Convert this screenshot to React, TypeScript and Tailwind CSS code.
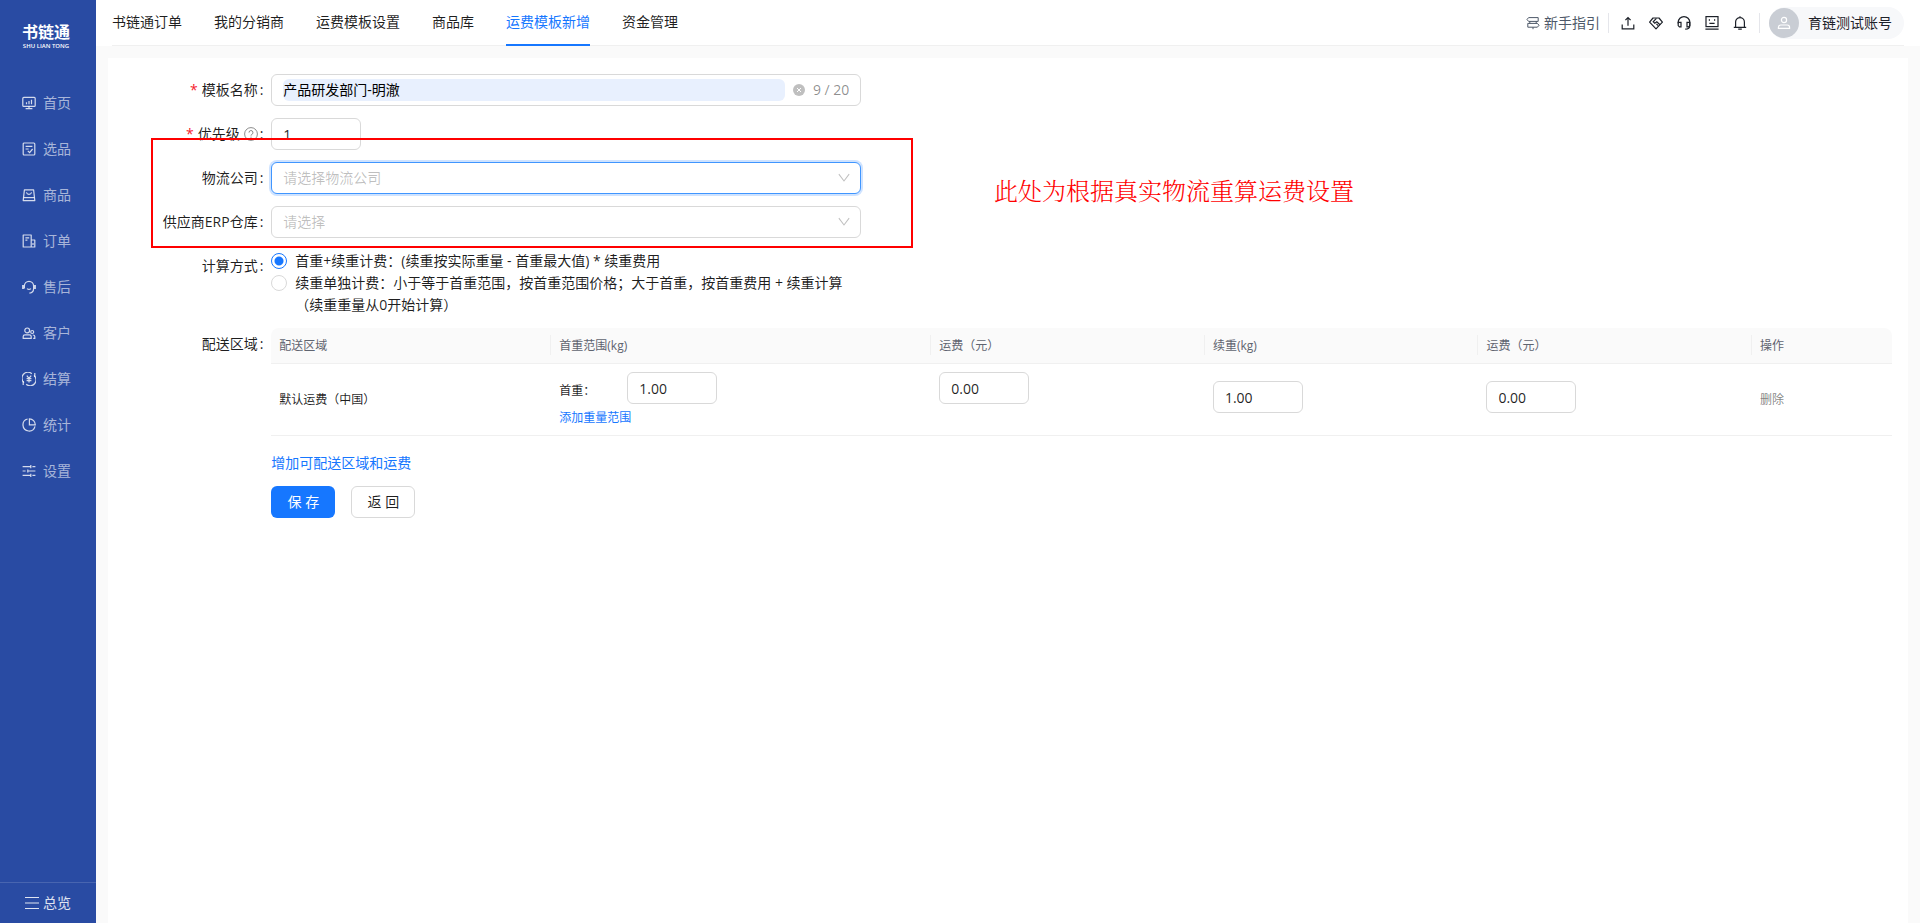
import type { ReactNode } from 'react'

type IconProps = { children: ReactNode; className?: string }

function Icon({ children, className = 'size-3.5' }: IconProps) {
  return (
    <svg
      viewBox="0 0 14 14"
      className={`shrink-0 ${className}`}
      fill="none"
      stroke="currentColor"
      strokeWidth="1.2"
      aria-hidden="true"
    >
      {children}
    </svg>
  )
}

const menu: { label: string; icon: ReactNode }[] = [
  {
    label: '首页',
    icon: (
      <>
        <rect x="0.8" y="1.4" width="12.4" height="9" rx="1" />
        <path d="M4.5 8.2V6.2M7 8.2V5M9.5 8.2V3.8M7 10.2v2M3.6 12.6h6.8" />
      </>
    ),
  },
  {
    label: '选品',
    icon: (
      <>
        <rect x="1.2" y="1" width="11.6" height="12" rx="1" />
        <path d="M3.6 4.4h6.8M3.6 7h3M5.8 8.8l1.8 1.8L10.6 7" />
      </>
    ),
  },
  {
    label: '商品',
    icon: (
      <>
        <path d="M2.4 1.8h9.2l1.2 10.8H1.200z" strokeLinejoin="round" />
        <path d="M4.4 4.4c.8 2.6 4.4 2.6 5.2 0" />
        <path d="M1.6 9.6h10.8" />
      </>
    ),
  },
  {
    label: '订单',
    icon: (
      <>
        <path d="M1.2 1h8v12h-8zM9.2 6h3.6v7H9.200" strokeLinejoin="round" />
        <path d="M3.4 3.8h3.8M3.4 6.2h2M11 9v2" />
      </>
    ),
  },
  {
    label: '售后',
    icon: (
      <>
        <path d="M2.4 8.6V6a4.6 4.6 0 0 1 9.2 0v2.4c0 2.6-1.6 4.4-4.2 4.8" />
        <path d="M1 5v4M13 5v4" strokeWidth="1.8" />
        <path d="M5 8.6c1.2 1 2.8 1 4 0" />
      </>
    ),
  },
  {
    label: '客户',
    icon: (
      <>
        <circle cx="5.2" cy="4.4" r="2.4" />
        <path d="M1.2 12.400v-1.800c0-1 .8-1.800 1.800-1.800h4.400c1 0 1.800.8 1.800 1.800v1.800z" />
        <circle cx="10.2" cy="6" r="1.5" />
        <path d="M10.800 9c1.200 0 2 .6 2 1.600v1.800h-1.600" />
      </>
    ),
  },
  {
    label: '结算',
    icon: (
      <>
        <path d="M2 10.6A5.8 5.8 0 0 1 9.800 1.700M12 3.400A5.800 5.800 0 0 1 4.200 12.300" />
        <path d="M12.800 1v4M1.200 9v4" />
        <path d="M4.800 3.600L7 6.400l2.200-2.800M4.600 6.700h4.800M4.600 8.700h4.800M7 6.400v4.200" />
      </>
    ),
  },
  {
    label: '统计',
    icon: (
      <>
        <path d="M5.600 1a6.100 6.100 0 1 0 7.400 7.400" />
        <path d="M7.400.8a6 6 0 0 1 5.900 6H7.400z" />
      </>
    ),
  },
  {
    label: '设置',
    icon: <path d="M.6 2.600h7.800M10.400 2.600h3M8.800 1v3.200M.6 7h3M6.200 7h7.200M5.800 5.400v3.200M.6 11.400h7.800M10.400 11.400h3M8.800 9.800V13" />,
  },
]

const tabs = ['书链通订单', '我的分销商', '运费模板设置', '商品库', '运费模板新增', '资金管理']
const activeTab = '运费模板新增'

const tools: { label: string; icon: ReactNode }[] = [
  { label: '上传', icon: <path d="M1.200 8.400v4.400h11.600V8.400M7 9.800V1.800M4.400 4.200L7 1.600l2.600 2.600" /> },
  {
    label: '合作',
    icon: (
      <>
        <path d="M7 12.800L.6 6.200 4 2h6l3.400 4.200z" strokeLinejoin="round" />
        <path d="M7.400 2.400L4.200 5.800l1.600 1.400 2-1.400 3.200 3M7.400 7.800l1.800 1.800" />
      </>
    ),
  },
  {
    label: '客服',
    icon: (
      <>
        <path d="M1.200 7.600V6.400a5.800 5.800 0 0 1 11.600 0v3.400c0 2-1.400 3.400-4.600 3.400" />
        <path d="M1.200 6.400H4v4.400H2.400L1.200 9.600zM12.800 6.400H10v4.400h1.600l1.200-1.200z" />
      </>
    ),
  },
  {
    label: '反馈',
    icon: (
      <>
        <rect x="1" y=".6" width="12" height="10" />
        <path d="M.4 13.200h13.200M4.400 3.200v1.600M9.600 3.200v1.600M4.400 7.400h5.200" />
      </>
    ),
  },
  {
    label: '通知',
    icon: <path d="M2.600 11.200V6a4.400 4.400 0 0 1 8.800 0v5.200M.8 11.400h12.400M7 .2v1.600M5.200 13.200h3.600" />,
  },
]

const fieldClass =
  'h-8 rounded-md border border-[#d9d9d9] bg-white px-[11px] text-sm text-black/88 outline-none'

function Sidebar() {
  return (
    <aside className="flex w-24 shrink-0 flex-col bg-[#294ba3] text-white">
      <div className="flex h-20 flex-col items-center pt-[21px] pr-1 text-center">
        <div className="text-base leading-[22px] font-semibold">书链通</div>
        <div className="text-[6px] leading-[6px] font-semibold whitespace-nowrap">SHU LIAN TONG</div>
      </div>
      <nav className="flex flex-1 flex-col">
        {menu.map((item) => (
          <a key={item.label} href="#" className="flex h-[46px] items-center gap-[7px] pl-[22px] text-sm text-white/60">
            <Icon className="size-3.5 text-white/80">{item.icon}</Icon>
            {item.label}
          </a>
        ))}
      </nav>
      <button type="button" className="flex h-[41px] items-center gap-1 border-t border-white/15 pl-[25px] text-sm text-white/85">
        <Icon>
          <path d="M0 1.500h14M0 7h14M0 12.500h14" />
        </Icon>
        总览
      </button>
    </aside>
  )
}

function Header() {
  return (
    <header className="bg-white px-4">
      <div className="flex h-[46px] items-stretch justify-between border-b border-[#f0f0f0]">
        <nav className="flex gap-8">
          {tabs.map((tab) => (
            <a
              key={tab}
              href="#"
              className={
                tab === activeTab
                  ? '-mb-px flex items-center border-b-2 border-[#1677ff] text-sm text-[#1677ff]'
                  : '-mb-px flex items-center border-b-2 border-transparent text-sm text-black/88'
              }
            >
              {tab}
            </a>
          ))}
        </nav>
        <div className="flex items-center">
          <a href="#" className="flex items-center gap-1 text-sm text-[#4e5969]">
            <Icon>
              <path d="M2.600 1.600h9.600v3.800H2.600L1 3.500zM11.400 7.400H1.800v3.800h9.600L13 9.300zM7 11.200v2M3.800 5.400v2M10.200 5.400v2" strokeWidth="1" />
            </Icon>
            新手指引
          </a>
          <span className="ml-2 h-5 w-px bg-[#e5e6eb]" />
          <div className="flex gap-3.5 px-3 text-[#1d2129]">
            {tools.map((tool) => (
              <button key={tool.label} type="button" aria-label={tool.label}>
                <Icon>{tool.icon}</Icon>
              </button>
            ))}
          </div>
          <span className="h-5 w-px bg-[#e5e6eb]" />
          <button type="button" className="ml-[9px] flex h-8 items-center gap-[9px] rounded-full bg-[#f7f8fa] pr-3 text-sm text-[#1d2129]">
            <span className="flex size-[30px] items-center justify-center rounded-full bg-[#c9cdd4] text-white">
              <Icon>
                <circle cx="7" cy="4" r="2.600" />
                <path d="M1.400 12.400v-1c0-1.400 1-2.400 2.400-2.400h6.400c1.400 0 2.400 1 2.400 2.400v1z" />
              </Icon>
            </span>
            育链测试账号
          </button>
        </div>
      </div>
    </header>
  )
}

type RowProps = { label: string; htmlFor?: string; required?: boolean; help?: boolean; children: ReactNode }

function FormRow({ label, htmlFor, required, help, children }: RowProps) {
  return (
    <div className="flex">
      <div className="flex h-8 w-1/12 shrink-0 items-center justify-end pr-2 text-sm whitespace-nowrap text-black/88">
        {required && <span className="mr-1 text-[#f5222d]">*</span>}
        <label htmlFor={htmlFor}>{label}</label>
        {help && (
          <Icon className="ml-1 size-3.5 text-black/45">
            <circle cx="7" cy="7" r="6.400" strokeWidth="1" />
            <path d="M5 5.600a2 2 0 1 1 2.800 1.800c-.6.300-.8.600-.8 1.200M7 9.600v1.200" strokeWidth="1" />
          </Icon>
        )}
        <span className="ml-0.5">:</span>
      </div>
      <div className="min-w-0 flex-1">{children}</div>
    </div>
  )
}

function SelectField({ id, placeholder, focused }: { id: string; placeholder: string; focused?: boolean }) {
  return (
    <div className="relative w-[590px]">
      <select
        id={id}
        className={
          focused
            ? 'h-8 w-full appearance-none rounded-md border border-[#4096ff] bg-white px-[11px] text-sm text-black/25 ring-2 ring-[#cfe3ff] outline-none'
            : 'h-8 w-full appearance-none rounded-md border border-[#d9d9d9] bg-white px-[11px] text-sm text-black/25 outline-none'
        }
      >
        <option>{placeholder}</option>
      </select>
      <Icon className="pointer-events-none absolute top-2.5 right-[11px] size-3 text-black/25">
        <path d="M1 2.500l6 8 6-8" />
      </Icon>
    </div>
  )
}

function RegionTable() {
  const th = 'relative px-2 text-left font-normal'
  const rule = <span className="absolute top-[7px] right-0 h-5 w-px bg-[#f0f0f0]" />
  return (
    <table className="w-full table-fixed border-separate border-spacing-0 text-xs text-black/88">
      <colgroup>
        <col className="w-[280px]" />
        <col className="w-[380px]" />
        <col />
        <col />
        <col />
        <col className="w-[140px]" />
      </colgroup>
      <thead>
        <tr className="h-9 text-[#5f6470] *:border-b *:border-[#f0f0f0] *:bg-[#fafafa]">
          <th className={`${th} rounded-tl-lg`}>配送区域{rule}</th>
          <th className={th}>首重范围(kg){rule}</th>
          <th className={th}>运费（元）{rule}</th>
          <th className={th}>续重(kg){rule}</th>
          <th className={th}>运费（元）{rule}</th>
          <th className={`${th} rounded-tr-lg`}>操作</th>
        </tr>
      </thead>
      <tbody>
        <tr className="h-[72px] *:border-b *:border-[#f0f0f0] *:px-2">
          <td>默认运费（中国）</td>
          <td className="pt-2 align-top">
            <div className="flex items-end">
              <label htmlFor="first-weight" className="w-[68px] leading-[26px]">首重：</label>
              <input id="first-weight" defaultValue="1.00" className={`${fieldClass} w-[90px]`} />
            </div>
            <a href="#" className="mt-1 block leading-5 text-[#1677ff]">添加重量范围</a>
          </td>
          <td className="pt-2 align-top">
            <input aria-label="首重运费" defaultValue="0.00" className={`${fieldClass} w-[90px]`} />
          </td>
          <td className="pt-[17px] align-top">
            <input aria-label="续重" defaultValue="1.00" className={`${fieldClass} w-[90px]`} />
          </td>
          <td className="pt-[17px] align-top">
            <input aria-label="续重运费" defaultValue="0.00" className={`${fieldClass} w-[90px]`} />
          </td>
          <td>
            <button type="button" className="text-black/50">删除</button>
          </td>
        </tr>
      </tbody>
    </table>
  )
}

function Radio({ checked, children }: { checked?: boolean; children: ReactNode }) {
  return (
    <label className="flex items-start gap-2 text-sm leading-[22px] text-black/88">
      <input
        type="radio"
        name="calc"
        defaultChecked={checked}
        className="mt-[3px] size-4 shrink-0 appearance-none rounded-full border border-[#d9d9d9] bg-white checked:border-[#1677ff] checked:bg-radial checked:from-[#1677ff] checked:from-[4px] checked:to-white checked:to-[5px]"
      />
      <span>{children}</span>
    </label>
  )
}

function TemplateForm() {
  return (
    <form className="relative flex flex-1 flex-col gap-3 bg-white p-4">
      <FormRow label="模板名称" htmlFor="name" required>
        <div className="flex h-8 w-[590px] items-center rounded-md border border-[#d9d9d9] px-[11px] text-sm">
          <input
            id="name"
            defaultValue="产品研发部门-明澈"
            className="h-[22px] min-w-0 flex-1 rounded-md bg-[#e8f0fe] pb-0.5 text-black outline-none"
          />
          <button type="button" aria-label="清除" className="mx-2 text-black/25">
            <svg viewBox="0 0 12 12" className="size-3" aria-hidden="true">
              <circle cx="6" cy="6" r="6" fill="currentColor" />
              <path d="M4 4l4 4M8 4L4 8" stroke="#fff" />
            </svg>
          </button>
          <span className="text-black/45">9 / 20</span>
        </div>
      </FormRow>
      <FormRow label="优先级" htmlFor="priority" required help>
        <input id="priority" defaultValue="1" className={`${fieldClass} block w-[90px]`} />
      </FormRow>
      <FormRow label="物流公司" htmlFor="company">
        <SelectField id="company" placeholder="请选择物流公司" focused />
      </FormRow>
      <FormRow label="供应商ERP仓库" htmlFor="warehouse">
        <SelectField id="warehouse" placeholder="请选择" />
      </FormRow>
      <FormRow label="计算方式">
        <Radio checked>首重+续重计费：(续重按实际重量 - 首重最大值) * 续重费用</Radio>
        <Radio>
          续重单独计费：小于等于首重范围，按首重范围价格；大于首重，按首重费用 + 续重计算
          <br />
          （续重重量从0开始计算）
        </Radio>
      </FormRow>
      <FormRow label="配送区域">
        <RegionTable />
        <a href="#" className="mt-4 block w-fit text-sm leading-[22px] text-[#1677ff]">增加可配送区域和运费</a>
        <div className="mt-3 flex gap-4 text-sm">
          <button type="button" className="h-8 w-16 rounded-md bg-[#1677ff] text-white">保 存</button>
          <button type="button" className="h-8 w-16 rounded-md border border-[#d9d9d9] bg-white text-black/88">返 回</button>
        </div>
      </FormRow>

      {/* callout over the logistics fields */}
      <div className="pointer-events-none absolute top-20 left-[43px] h-[110px] w-[762px] border-2 border-[#ff0000]" />
      <p className="pointer-events-none absolute top-[118px] left-[886px] font-['Liberation_Serif','Noto_Serif_CJK_SC','Noto_Sans_CJK_SC',serif] text-2xl leading-8 font-light text-[#ff0000]">
        此处为根据真实物流重算运费设置
      </p>
    </form>
  )
}

function App() {
  return (
    <div className="flex min-h-screen bg-[#fafafa] font-['Open_Sans','Noto_Sans_CJK_SC',sans-serif]">
      <Sidebar />
      <div className="flex min-w-0 flex-1 flex-col">
        <Header />
        <main className="flex flex-1 flex-col px-3 pt-3">
          <TemplateForm />
        </main>
      </div>
    </div>
  )
}

export default App
